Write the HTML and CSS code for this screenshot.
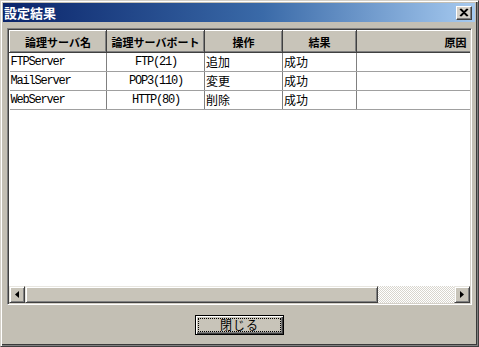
FILE: index.html
```html
<!DOCTYPE html>
<html lang="ja">
<head>
    <meta charset="UTF-8">
    <title>設定結果</title>
    <link rel="stylesheet" href="styles.css">
</head>
<body>
    <div class="window">
        <div class="titlebar">
            <span class="title">設定結果</span>
            <span class="close-btn">
                <svg width="10" height="9" viewBox="0 0 10 9">
                    <path d="M1 1 L8 8 M2 1 L9 8 M8 1 L1 8 M9 1 L2 8" stroke="#000" stroke-width="1.2" fill="none"/>
                </svg>
            </span>
        </div>

        <div class="content">
            <div class="list-frame">
                <div class="list-view">
                    <table class="result-table">
                        <colgroup>
                            <col class="c-name">
                            <col class="c-port">
                            <col class="c-op">
                            <col class="c-result">
                            <col class="c-reason">
                        </colgroup>
                        <thead>
                            <tr>
                                <th>論理サーバ名</th>
                                <th>論理サーバポート</th>
                                <th>操作</th>
                                <th>結果</th>
                                <th>原因</th>
                            </tr>
                        </thead>
                        <tbody>
                            <tr>
                                <td class="mono">FTPServer</td>
                                <td class="mono center">FTP(21)</td>
                                <td>追加</td>
                                <td>成功</td>
                                <td></td>
                            </tr>
                            <tr>
                                <td class="mono">MailServer</td>
                                <td class="mono center">POP3(110)</td>
                                <td>変更</td>
                                <td>成功</td>
                                <td></td>
                            </tr>
                            <tr>
                                <td class="mono">WebServer</td>
                                <td class="mono center">HTTP(80)</td>
                                <td>削除</td>
                                <td>成功</td>
                                <td></td>
                            </tr>
                        </tbody>
                    </table>
                </div>
                <div class="hscroll">
                    <span class="arrow-btn">
                        <svg width="4" height="7" viewBox="0 0 4 7"><path d="M4 0 L0 3.5 L4 7 Z" fill="#000"/></svg>
                    </span>
                    <span class="thumb"></span>
                    <span class="track"></span>
                    <span class="arrow-btn">
                        <svg width="4" height="7" viewBox="0 0 4 7"><path d="M0 0 L4 3.5 L0 7 Z" fill="#000"/></svg>
                    </span>
                </div>
            </div>

            <div class="footer">
                <button class="close-button"><span class="focus">閉じる</span></button>
            </div>
        </div>
    </div>
</body>
</html>
```

FILE: styles.css
```css
html, body {
    margin: 0;
    padding: 0;
}

body {
    font-family: "Noto Sans CJK JP", sans-serif;
    font-size: 12px;
    background: #c3bfb4;
}

.window {
    width: 479px;
    height: 347px;
    box-sizing: border-box;
    background: #c3bfb4;
    border-top: 1px solid #d4d0c8;
    border-left: 1px solid #d4d0c8;
    border-right: 1px solid #404040;
    border-bottom: 1px solid #404040;
    box-shadow: inset 1px 1px 0 #fff, inset -1px -1px 0 #808080, inset -2px -2px 0 #3a3a3a;
    display: flex;
    flex-direction: column;
}

.titlebar {
    margin: 2px 3px 0 2px;
    height: 19px;
    background: linear-gradient(to right, #0a246a 0%, #3a6aa8 55%, #a6caf0 100%);
    display: flex;
    align-items: center;
    justify-content: space-between;
    padding: 0 0 0 1px;
}

.title {
    color: #fff;
    font-weight: bold;
    font-size: 13px;
    line-height: 19px;
}

.close-btn {
    width: 16px;
    height: 14px;
    box-sizing: border-box;
    background: #d4d0c8;
    border-top: 1px solid #fff;
    border-left: 1px solid #fff;
    border-right: 1px solid #404040;
    border-bottom: 1px solid #404040;
    box-shadow: inset -1px -1px 0 #808080;
    display: flex;
    align-items: center;
    justify-content: center;
    margin-right: 3px;
}

.content {
    flex: 1;
    padding: 6px 6px 0 6px;
    display: flex;
    flex-direction: column;
}

.list-frame {
    height: 277px;
    box-sizing: border-box;
    background: #fff;
    border-top: 1px solid #808080;
    border-left: 1px solid #808080;
    border-right: 1px solid #fff;
    border-bottom: 1px solid #fff;
    box-shadow: inset 1px 1px 0 #404040, inset -1px -1px 0 #d4d0c8;
    padding: 1px;
    display: flex;
    flex-direction: column;
}

.list-view {
    flex: 1;
    overflow: hidden;
}

.result-table {
    border-collapse: collapse;
    table-layout: fixed;
    width: 545px;
}

.c-name { width: 97px; }
.c-port { width: 98px; }
.c-op { width: 78px; }
.c-result { width: 74px; }
.c-reason { width: 198px; }

.result-table th {
    height: 22px;
    padding: 0;
    box-sizing: border-box;
    background: #c8c4b9;
    font-weight: bold;
    font-size: 11px;
    white-space: nowrap;
    text-align: center;
    color: #000;
    border-top: 1px solid #fff;
    border-left: 1px solid #fff;
    border-right: 1px solid #404040;
    border-bottom: 1px solid #404040;
    box-shadow: inset -1px -1px 0 #808080;
}

.result-table td {
    height: 19px;
    padding: 0 0 0 1px;
    box-sizing: border-box;
    border-right: 1px solid #808080;
    border-bottom: 1px solid #a0a0a0;
    white-space: nowrap;
    overflow: hidden;
    line-height: 18px;
}

.result-table tbody tr:first-child td {
    border-top: 1px solid #fff;
}

.mono {
    font-family: "Liberation Mono", monospace;
    font-size: 12px;
    letter-spacing: -1.2px;
}

.center {
    text-align: center;
}

.hscroll {
    height: 17px;
    display: flex;
    background: #c3bfb4;
}

.arrow-btn {
    width: 16px;
    height: 17px;
    box-sizing: border-box;
    background: #c8c4b9;
    border-top: 1px solid #e8e6e0;
    border-left: 1px solid #e8e6e0;
    border-right: 1px solid #404040;
    border-bottom: 1px solid #404040;
    box-shadow: inset 1px 1px 0 #fff, inset -1px -1px 0 #808080;
    display: flex;
    align-items: center;
    justify-content: center;
}

.thumb {
    width: 353px;
    height: 17px;
    box-sizing: border-box;
    background: #c8c4b9;
    border-top: 1px solid #e8e6e0;
    border-left: 1px solid #e8e6e0;
    border-right: 1px solid #404040;
    border-bottom: 1px solid #404040;
    box-shadow: inset 1px 1px 0 #fff, inset -1px -1px 0 #808080;
}

.track {
    flex: 1;
    background: repeating-conic-gradient(#ffffff 0 25%, #d8d5cd 0 50%) 0 0 / 2px 2px;
}

.footer {
    display: flex;
    justify-content: center;
    padding-top: 10px;
}

.close-button {
    width: 89px;
    height: 20px;
    padding: 2px;
    box-sizing: border-box;
    background: #c8c4b9;
    border: 1px solid #000;
    box-shadow: inset 1px 1px 0 #fff, inset -1px -1px 0 #404040, inset -2px -2px 0 #808080;
    font-family: "Noto Sans CJK JP", sans-serif;
    font-size: 12px;
    display: flex;
}

.focus {
    flex: 1;
    border: 1px dotted #000;
    line-height: 12px;
    text-align: center;
    letter-spacing: 1px;
}
```
